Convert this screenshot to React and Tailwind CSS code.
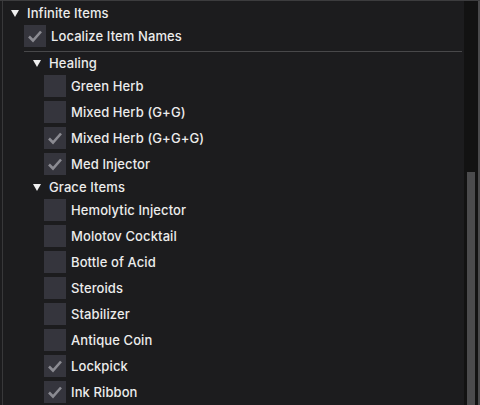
import React from 'react';

const healing = [
  { name: 'Green Herb', on: false },
  { name: 'Mixed Herb (G+G)', on: false },
  { name: 'Mixed Herb (G+G+G)', on: true },
  { name: 'Med Injector', on: true },
];

const grace = [
  { name: 'Hemolytic Injector', on: false },
  { name: 'Molotov Cocktail', on: false },
  { name: 'Bottle of Acid', on: false },
  { name: 'Steroids', on: false },
  { name: 'Stabilizer', on: false },
  { name: 'Antique Coin', on: false },
  { name: 'Lockpick', on: true },
  { name: 'Ink Ribbon', on: true },
];

const Arrow = () => (
  <svg width="8" height="7" viewBox="0 0 8 7" className="shrink-0">
    <polygon points="0,0 8,0 4,7" fill="#f0f0f0" />
  </svg>
);

const Check = ({ label, on }) => (
  <div className="flex items-center h-[22px] mb-[4px] gap-[5px]">
    <div className="w-[22px] h-[22px] bg-[#35353d] flex items-center justify-center shrink-0">
      {on && (
        <svg width="22" height="22" viewBox="0 0 22 22">
          <polyline points="5,11.5 9,15.5 17,6.5" fill="none" stroke="#8b8b92" strokeWidth="2.6" />
        </svg>
      )}
    </div>
    <span className="text-[13px] font-medium text-[#ececec] leading-none tracking-[0.1px]">{label}</span>
  </div>
);

const Node = ({ label }) => (
  <div className="flex items-center h-[16px] mb-[4px] gap-[8px]">
    <Arrow />
    <span className="text-[13px] font-medium text-[#ececec] leading-none tracking-[0.1px]">{label}</span>
  </div>
);

export default function App() {
  return (
    <div
      className="w-[480px] h-[405px] bg-[#1c1c1e] flex overflow-hidden border-t border-[#3c3c3e]"
      style={{ fontFamily: 'Inter, "Noto Sans", sans-serif' }}
    >
      <div className="w-[2px] shrink-0" />
      <div className="w-[1px] shrink-0 bg-[#38383a]" />
      <div className="flex-1 pl-[8px] pt-[4px] pr-[2px]">
        <Node label="Infinite Items" />
        <div className="pl-[13px]">
          <Check label="Localize Item Names" on />
          <div className="h-[1px] bg-[#48484a] mb-[3px]" />
          <div className="pl-[9px]">
            <Node label="Healing" />
            <div className="pl-[11px]">
              {healing.map((h) => (
                <Check key={h.name} label={h.name} on={h.on} />
              ))}
            </div>
            <Node label="Grace Items" />
            <div className="pl-[11px]">
              {grace.map((g) => (
                <Check key={g.name} label={g.name} on={g.on} />
              ))}
            </div>
          </div>
        </div>
      </div>
      <div className="w-[14px] shrink-0 bg-[#121212] flex flex-col pt-[171px] px-[3px]">
        <div className="flex-1 bg-[#4b4b4d]" />
      </div>
      <div className="w-[2px] shrink-0 bg-[#4a4a4c]" />
    </div>
  );
}
